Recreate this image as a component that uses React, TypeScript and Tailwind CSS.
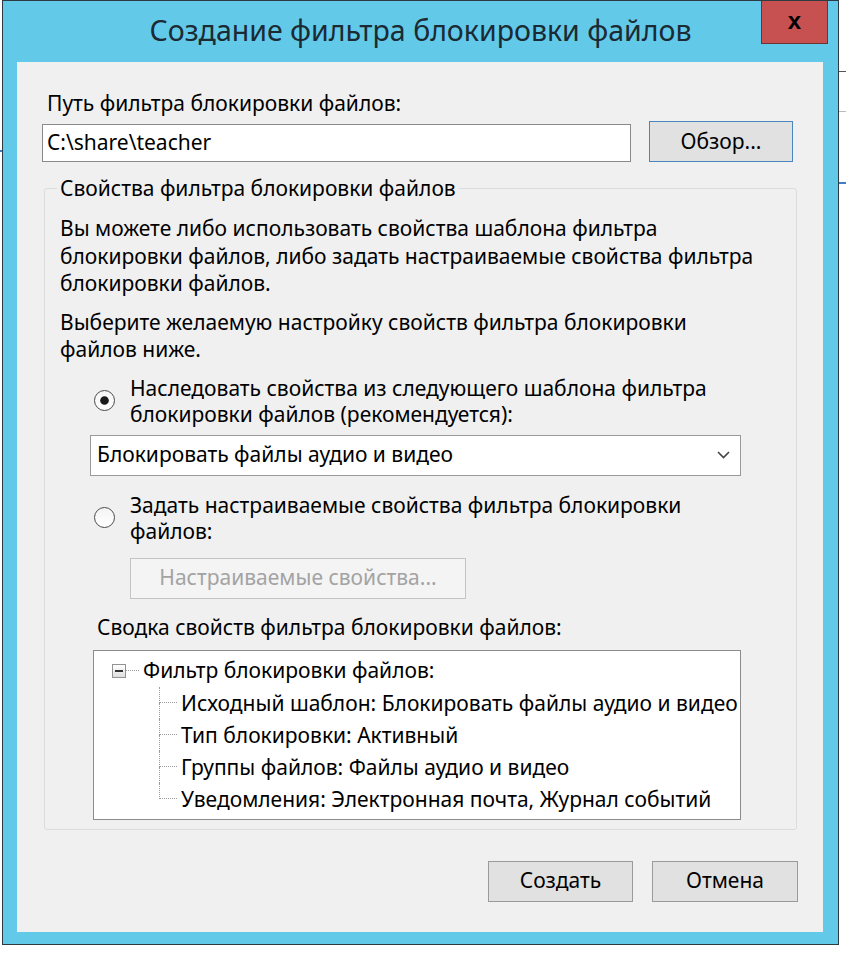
import { FaCircle } from "react-icons/fa";

const treeItems = [
    "Исходный шаблон: Блокировать файлы аудио и видео",
    "Тип блокировки: Активный",
    "Группы файлов: Файлы аудио и видео",
    "Уведомления: Электронная почта, Журнал событий",
];

const Radio = ({ checked }: { checked?: boolean }) => (
    <div className="w-[21px] h-[21px] rounded-full border border-[#4a4a4a] bg-gradient-to-b from-[#f4f4f4] to-white flex items-center justify-center shrink-0">
        {checked && <FaCircle size={9} className="text-[#1a1a1a]" />}
    </div>
);

export default function App() {
    return (
        <div className="w-[846px] h-[954px] bg-white flex font-['Noto_Sans',sans-serif] text-[21px] text-black">
            <div className="w-[2px] h-full flex flex-col">
                <div className="h-[150px]" />
                <div className="h-[2px] bg-[#3f7fc7]" />
            </div>

            {/* window */}
            <div className="w-[837px] h-[945px] border border-[#2e3a42] bg-[#62c9e9] flex flex-col relative">
                <div className="h-[61px] flex items-center justify-center">
                    <span className="text-[28.5px] text-[#1b2a33] leading-none -mt-[2px]">
                        Создание фильтра блокировки файлов
                    </span>
                </div>
                <div className="absolute top-0 right-[10px] w-[67px] h-[43px] bg-[#c75050] border border-[#6e3232] border-t-0 flex items-center justify-center">
                    <span className="font-['Liberation_Sans',sans-serif] font-bold text-[24px] leading-none -mt-[3px]">
                        x
                    </span>
                </div>

                {/* client */}
                <div className="ml-[14px] w-[806px] h-[870px] bg-[#f0f0f0] flex flex-col">
                    <div className="pt-[29px] pl-[30px] leading-[24px]">
                        Путь фильтра блокировки файлов:
                    </div>
                    <div className="mt-[6px] flex items-start">
                        <div className="ml-[25px] mt-[3px] w-[589px] h-[38px] bg-white border border-[#8a8a8a] flex items-center pl-[4px]">
                            C:\share\teacher
                        </div>
                        <button className="ml-[18px] w-[144px] h-[41px] bg-[#e1e1e1] border border-[#4a86bd] flex items-center justify-center">
                            Обзор...
                        </button>
                    </div>

                    {/* group box */}
                    <div className="mt-[26px] ml-[27px] w-[753px] border border-[#dcdcdc] rounded-[3px] flex flex-col pb-[9px]">
                        <span className="-mt-[13px] ml-[12px] px-[3px] self-start bg-[#f0f0f0] leading-[24px]">
                            Свойства фильтра блокировки файлов
                        </span>
                        <div className="px-[15px]">
                            <p className="mt-[15px] leading-[27.5px]">
                                Вы можете либо использовать свойства шаблона фильтра
                                <br />
                                блокировки файлов, либо задать настраиваемые свойства фильтра
                                <br />
                                блокировки файлов.
                            </p>
                            <p className="mt-[11px] leading-[27.5px]">
                                Выберите желаемую настройку свойств фильтра блокировки
                                <br />
                                файлов ниже.
                            </p>
                        </div>

                        <div className="mt-[11px] flex items-center">
                            <div className="ml-[49px] mr-[15px]">
                                <Radio checked />
                            </div>
                            <div className="leading-[26px]">
                                Наследовать свойства из следующего шаблона фильтра
                                <br />
                                блокировки файлов (рекомендуется):
                            </div>
                        </div>

                        <div className="mt-[8px] ml-[45px] w-[651px] h-[41px] bg-white border border-[#9a9a9a] flex items-center justify-between pl-[6px] pr-[10px]">
                            <span>Блокировать файлы аудио и видео</span>
                            <svg width="13" height="8" viewBox="0 0 13 8">
                                <polyline points="1,1 6.5,6.5 12,1" fill="none" stroke="#444" strokeWidth="1.6" />
                            </svg>
                        </div>

                        <div className="mt-[16px] flex items-center">
                            <div className="ml-[49px] mr-[15px]">
                                <Radio />
                            </div>
                            <div className="leading-[26px]">
                                Задать настраиваемые свойства фильтра блокировки
                                <br />
                                файлов:
                            </div>
                        </div>

                        <button className="mt-[14px] ml-[85px] self-start w-[336px] h-[41px] bg-[#f4f4f4] border border-[#c4c4c4] text-[#a3a3a3] flex items-center justify-center">
                            Настраиваемые свойства...
                        </button>

                        <div className="mt-[16px] ml-[52px] leading-[24px]">
                            Сводка свойств фильтра блокировки файлов:
                        </div>

                        {/* tree */}
                        <div className="mt-[11px] ml-[48px] w-[648px] h-[170px] bg-white border border-[#8c8c8c] pt-[4px] flex flex-col">
                            <div className="h-[32px] flex items-center pl-[18px]">
                                <div className="w-[14px] h-[14px] border border-[#929292] bg-gradient-to-b from-white to-[#dedede] flex items-center justify-center">
                                    <div className="w-[8px] h-[2px] bg-[#333]" />
                                </div>
                                <div className="w-[13px] border-t border-dotted border-[#9a9a9a]" />
                                <span className="ml-[4px]">Фильтр блокировки файлов:</span>
                            </div>
                            <div className="pl-[65px] flex flex-col">
                                {treeItems.map((item, idx) => (
                                    <div key={idx} className="h-[32px] flex">
                                        <div className="w-[18px] flex flex-col">
                                            <div className="h-[16px] border-l border-b border-dotted border-[#9a9a9a]" />
                                            {idx < treeItems.length - 1 && (
                                                <div className="h-[16px] border-l border-dotted border-[#9a9a9a]" />
                                            )}
                                        </div>
                                        <span className="ml-[4px] leading-[32px] whitespace-nowrap">{item}</span>
                                    </div>
                                ))}
                            </div>
                        </div>
                    </div>

                    <div className="mt-[31px] flex justify-end gap-[19px] pr-[25px]">
                        <button className="w-[145px] h-[41px] bg-[#e1e1e1] border border-[#9a9a9a] flex items-center justify-center">
                            Создать
                        </button>
                        <button className="w-[146px] h-[41px] bg-[#e1e1e1] border border-[#9a9a9a] flex items-center justify-center">
                            Отмена
                        </button>
                    </div>
                </div>
            </div>

            <div className="flex-1 flex flex-col">
                <div className="h-[72px] border-b border-[#555]" />
                <div className="h-[40px] border-b border-[#bbb]" />
                <div className="h-[70px]" />
                <div className="h-[2px] bg-[#3f7fc7]" />
            </div>
        </div>
    );
}
